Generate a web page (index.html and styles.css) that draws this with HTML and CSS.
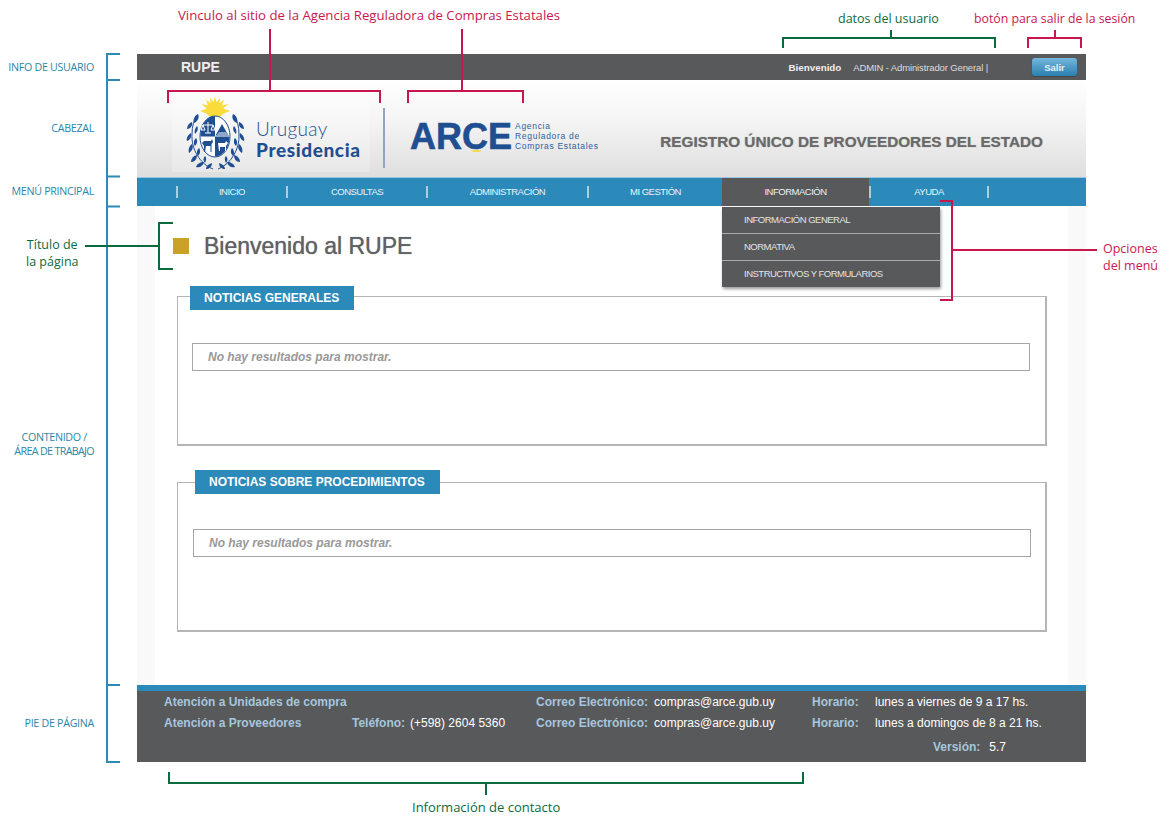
FILE: index.html
```html
<!DOCTYPE html>
<html lang="es">

<head>
    <meta charset="UTF-8">
    <title>RUPE - Bienvenido</title>
    <link rel="stylesheet" href="styles.css">
</head>

<body>
    <div class="sheet">
        <div class="mock">
            <div class="topbar">
                <span class="app-name">RUPE</span>
                <span class="welcome">Bienvenido</span>
                <span class="user">ADMIN - Administrador General |</span>
                <button class="logout" type="button">Salir</button>
            </div>

            <div class="header">
                <a class="logo-uy" href="#">
                    <svg class="crest" viewBox="0 0 60 76" width="60" height="76">
                        <ellipse cx="29" cy="13" rx="9" ry="8" fill="#f9dc3c" />
                        <polygon fill="#f9dc3c" points="14,14 21.200,11.400 15,7 22.300,8.600 19.800,2.500 24.600,6.300 24,0.500 27.400,5.200 29,0 30.600,5.200 34,0.500 33.400,6.300 38.200,2.500 35.700,8.600 43,7 36.800,11.400 44,14 29,20" />
                        <g id="branch" fill="#1f4e91">
                            <path d="M27 72C14 67 5 52 6 37 6 29 8 23 11 18" fill="none" stroke="#1f4e91" stroke-width="1" />
                            <path d="M12 17c-4 2-5 6-4 9 3-1 6-5 4-9zM6 25c-3 1-5 4-5 7 3 0 6-3 5-7zM11 29c-2 2-3 5-2 8 2-2 4-5 2-8zM5 36c-3 2-5 5-4 8 3-1 5-4 4-8zM10 41c-2 2-3 5-1 8 2-2 3-5 1-8zM6 47c-3 2-4 6-3 9 3-2 5-5 3-9zM13 51c-2 2-3 5-1 8 2-2 3-5 1-8zM11 58c-4 1-6 4-6 7 4 0 6-3 6-7zM19 59c-2 2-2 5 0 7 1-2 2-5 0-7zM18 65c-4 0-7 2-8 5 4 1 7-1 8-5zM26 66c-3 1-6 3-6 6 3 0 6-2 6-6z" />
                        </g>
                        <use href="#branch" transform="matrix(-1 0 0 1 59 0)" />
                        <ellipse cx="29" cy="39.500" rx="15" ry="20.500" fill="#fff" stroke="#1f4e91" stroke-width="1" />
                        <path d="M29 19A14.500 20 0 0 0 14.500 39.500H29z" fill="#1f4e91" />
                        <path d="M29 39.500H43.500A14.500 20 0 0 1 29 59.500z" fill="#1f4e91" />
                        <path d="M29.500 38.500L36 27 42.500 38.500z" fill="#1f4e91" />
                        <path d="M30 39L33 35H40L43 39z" fill="#8fa6c8" />
                        <path d="M22 25V36M17 28H27M17 28L15 33H19zM27 28L25 33H29zM19 36H25" stroke="#fff" stroke-width="1" fill="none" />
                        <path d="M18 44H25L26 42 27 45 25.500 47V55H24.500V49H20L19 55H18V49L16 46z" fill="#1f4e91" />
                        <path d="M32 46H39L40 44 42 46 40 49V54H39V50H34V54H33z" fill="#fff" />
                    </svg>
                    <span class="logo-uy-text">
                        <span class="uy-top">Uruguay</span>
                        <span class="uy-bottom">Presidencia</span>
                    </span>
                </a>
                <span class="logo-divider"></span>
                <a class="logo-arce" href="#">
                    <span class="arce-word">ARCE</span>
                    <span class="arce-text">Agencia<br>Reguladora de<br>Compras Estatales</span>
                </a>
                <h1 class="site-title">REGISTRO ÚNICO DE PROVEEDORES DEL ESTADO</h1>
            </div>

            <ul class="nav">
                <li class="nav-sep"></li>
                <li class="nav-item nav-inicio">INICIO</li>
                <li class="nav-sep"></li>
                <li class="nav-item nav-consultas">CONSULTAS</li>
                <li class="nav-sep"></li>
                <li class="nav-item nav-admin">ADMINISTRACIÓN</li>
                <li class="nav-sep"></li>
                <li class="nav-item nav-gestion">MI GESTIÓN</li>
                <li class="nav-item nav-info active">
                    INFORMACIÓN
                    <ul class="dropdown">
                        <li>INFORMACIÓN GENERAL</li>
                        <li>NORMATIVA</li>
                        <li>INSTRUCTIVOS Y FORMULARIOS</li>
                    </ul>
                </li>
                <li class="nav-sep"></li>
                <li class="nav-item nav-ayuda">AYUDA</li>
                <li class="nav-sep"></li>
            </ul>

            <div class="content">
                <div class="work-area">
                    <div class="page-title">
                        <span class="title-mark"></span>
                        <h2>Bienvenido al RUPE</h2>
                    </div>

                    <div class="panel">
                        <div class="panel-legend">NOTICIAS GENERALES</div>
                        <div class="panel-msg">No hay resultados para mostrar.</div>
                    </div>

                    <div class="panel panel-second">
                        <div class="panel-legend">NOTICIAS SOBRE PROCEDIMIENTOS</div>
                        <div class="panel-msg">No hay resultados para mostrar.</div>
                    </div>
                </div>
            </div>

            <div class="footer">
                <div class="footer-grid">
                    <span class="lbl wide">Atención a Unidades de compra</span>
                    <span class="lbl">Correo Electrónico:</span>
                    <span>compras@arce.gub.uy</span>
                    <span class="lbl">Horario:</span>
                    <span>lunes a viernes de 9 a 17 hs.</span>

                    <span class="lbl">Atención a Proveedores</span>
                    <span class="lbl">Teléfono:</span>
                    <span>(+598) 2604 5360</span>
                    <span class="lbl">Correo Electrónico:</span>
                    <span>compras@arce.gub.uy</span>
                    <span class="lbl">Horario:</span>
                    <span>lunes a domingos de 8 a 21 hs.</span>
                </div>
                <div class="version">
                    <span class="lbl">Versión:</span>
                    <span>5.7</span>
                </div>
            </div>
        </div>

        <!-- anotaciones sobre la captura -->
        <svg class="marks" viewBox="0 0 1172 824" width="1172" height="824">
            <path class="mark-blue" d="M120 54H107V762H120M107 80H120M107 176.500H120M107 206.500H120M107 685H120" />
            <path class="mark-red" d="M168 103V91H380V103M270 29V91M408 103V91H523V103M462 29V91" />
            <path class="mark-red" d="M1028 48V38H1081V48M1055 30V38" />
            <path class="mark-red" d="M940 201H952V300H940M952 250H1097" />
            <path class="mark-green" d="M783 48V38H995V48M891 30V38" />
            <path class="mark-green" d="M173 223H159V269H173M85 246H159" />
            <path class="mark-green" d="M169 772V783H803V772M486 783V795" />
        </svg>

        <span class="note note-red note-link">Vinculo al sitio de la Agencia Reguladora de Compras Estatales</span>
        <span class="note note-green note-data">datos del usuario</span>
        <span class="note note-red note-exit">botón para salir de la sesión</span>
        <span class="note note-red note-options">Opciones<br>del menú</span>
        <span class="note note-green note-title">Título de<br>la página</span>
        <span class="note note-green note-contact">Información de contacto</span>

        <span class="side side-info">INFO DE USUARIO</span>
        <span class="side side-head">CABEZAL</span>
        <span class="side side-menu">MENÚ PRINCIPAL</span>
        <span class="side side-work">CONTENIDO /<br><span class="side-tight">ÁREA DE TRABAJO</span></span>
        <span class="side side-foot">PIE DE PÁGINA</span>
    </div>
</body>

</html>
```

FILE: styles.css
```css
body {
    margin: 0;
    background-color: #fff;
    font-family: "Liberation Sans", Arial, sans-serif;
    color: #58595b;
}

ul {
    list-style-type: none;
    margin: 0;
    padding: 0;
}

a {
    text-decoration: none;
}

.sheet {
    position: relative;
    width: 1172px;
    height: 824px;
    overflow: hidden;
    padding: 54px 86px 0 137px;
    box-sizing: border-box;
}

/* barra superior */
.topbar {
    height: 26px;
    background-color: #58595b;
    display: flex;
    align-items: center;
    padding: 0 9px 0 44px;
    color: #eee;
}

.app-name {
    font-size: 14px;
    font-weight: bold;
    margin-right: auto;
}

.welcome {
    font-size: 9.800px;
    font-weight: bold;
    margin-right: 12px;
}

.user {
    font-size: 9.500px;
    letter-spacing: -0.130px;
    color: #ddd;
    margin-right: 44px;
}

.logout {
    width: 45px;
    height: 18px;
    padding: 0;
    border: 0;
    border-radius: 3px;
    background: linear-gradient(#74b7dd, #2b7fb0);
    box-shadow: 0 1px 1px #444;
    color: #e8f2f8;
    font-family: inherit;
    font-size: 9.500px;
    font-weight: bold;
}

/* cabezal */
.header {
    height: 97px;
    box-sizing: border-box;
    background: linear-gradient(#fff, #f5f5f5 40%, #dedede);
    display: flex;
    align-items: stretch;
}

.logo-uy {
    margin: 18px 0 5px 35px;
    width: 198px;
    display: flex;
    align-items: center;
    background-color: rgba(255, 255, 255, 0.25);
}

.crest {
    margin-left: 14px;
    flex: none;
}

.logo-uy-text {
    margin-left: 10px;
    display: flex;
    flex-direction: column;
    color: #1f4e91;
    padding-top: 7px;
}

.uy-top {
    font-family: Lato, sans-serif;
    font-size: 19px;
    font-weight: 300;
    line-height: 21px;
    letter-spacing: 0.300px;
}

.uy-bottom {
    font-family: Lato, sans-serif;
    font-size: 19px;
    font-weight: 900;
    line-height: 21px;
    letter-spacing: 0.600px;
}

.logo-divider {
    width: 2px;
    margin: 28px 0 9px 13px;
    background-color: #8ea5c6;
}

.logo-arce {
    margin: 18px 0 5px 0;
    padding: 4px 0 0 25px;
    width: 225px;
    box-sizing: border-box;
    display: flex;
    align-items: center;
    color: #1f4e91;
}

.arce-word {
    position: relative;
    font-size: 36px;
    font-weight: bold;
    line-height: 36px;
    -webkit-text-stroke: 0.600px #1f4e91;
}

.arce-word::after {
    content: "";
    position: absolute;
    left: 62px;
    bottom: 3px;
    width: 9px;
    height: 2px;
    border-radius: 0 0 4px 4px;
    background-color: #f1dc4b;
}

.arce-text {
    margin-left: 3px;
    font-size: 8.500px;
    line-height: 9.800px;
    letter-spacing: 0.700px;
    color: #2f5f9e;
    white-space: nowrap;
}

.site-title {
    margin: 53px 43px 0 auto;
    font-size: 15.300px;
    line-height: 18px;
    font-weight: bold;
    color: #6a6a6a;
    white-space: nowrap;
    text-shadow: 0 0 1px #999;
}

/* menu principal */
.nav {
    position: relative;
    height: 29px;
    box-sizing: border-box;
    background-color: #2b8aba;
    border-top: 1px solid #9cc8de;
    display: flex;
    align-items: center;
    padding-left: 39px;
    color: #eaf3f8;
    font-size: 9.500px;
    letter-spacing: -0.500px;
}

.nav-sep {
    width: 2px;
    height: 12px;
    background-color: #a9cfe3;
}

.nav-item {
    text-align: center;
    line-height: 28px;
}

.nav-inicio {
    width: 108px;
}

.nav-consultas {
    width: 138px;
}

.nav-admin {
    width: 159px;
}

.nav-gestion {
    width: 133px;
}

.nav-info {
    width: 147px;
}

.nav-ayuda {
    width: 116px;
}

.active {
    background-color: #58595b;
}

.dropdown {
    position: absolute;
    left: 585px;
    top: 29px;
    width: 218px;
    background-color: #58595b;
    box-shadow: 1px 2px 3px #999;
    text-align: left;
    color: #e4e4e4;
}

.dropdown li {
    height: 26px;
    line-height: 26px;
    padding-left: 22px;
    border-bottom: 1px solid #aaa;
}

.dropdown li:last-child {
    border-bottom: 0;
}

/* contenido */
.content {
    height: 479px;
    background-color: #f9f9f9;
    padding: 0 18px;
}

.work-area {
    height: 100%;
    box-sizing: border-box;
    background-color: #fff;
    padding: 32px 21px 0 22px;
}

.page-title {
    display: flex;
    align-items: center;
    height: 16px;
    margin-left: -4px;
}

.title-mark {
    width: 16px;
    height: 16px;
    background-color: #c9a227;
}

.page-title h2 {
    margin: 0 0 0 15px;
    font-size: 23px;
    font-weight: normal;
    color: #606163;
    text-shadow: 0 0 1px #777;
}

.panel {
    height: 150px;
    box-sizing: border-box;
    margin-top: 42px;
    border: 1px solid #b5b5b5;
    border-bottom-width: 2px;
    border-right-width: 2px;
}

.panel-second {
    margin-top: 36px;
    height: 150px;
}

.panel-legend {
    width: fit-content;
    height: 24px;
    line-height: 24px;
    margin: -11px 0 0 12px;
    padding: 0 15px 0 14px;
    background-color: #2b8aba;
    color: #fff;
    font-size: 12px;
    font-weight: bold;
}

.panel-second .panel-legend {
    margin: -13px 0 0 17px;
}

.panel-msg {
    height: 28px;
    box-sizing: border-box;
    line-height: 26px;
    margin: 33px 15px 0 14px;
    padding-left: 15px;
    border: 1px solid #a5a5a5;
    color: #999;
    font-size: 12px;
    font-style: italic;
    font-weight: bold;
}

.panel-second .panel-msg {
    margin: 35px 14px 0 15px;
}

/* pie de pagina */
.footer {
    height: 77px;
    box-sizing: border-box;
    background-color: #58595b;
    border-top: 6px solid #2b8aba;
    color: #fff;
    font-size: 12px;
}

.footer-grid {
    display: grid;
    grid-template-columns: 188px 58px 126px 118px 158px 63px auto;
    row-gap: 7px;
    padding: 4px 0 0 27px;
    line-height: 14px;
    white-space: nowrap;
}

.wide {
    grid-column: 1 / span 3;
}

.lbl {
    color: #a7c6dd;
    font-weight: bold;
}

.version {
    display: flex;
    gap: 9px;
    margin: 10px 0 0 796px;
    line-height: 14px;
}

/* anotaciones */
.marks {
    position: absolute;
    left: 0;
    top: 0;
    fill: none;
    stroke-width: 2;
}

.mark-blue {
    stroke: #2b8aba;
}

.mark-red {
    stroke: #c8174f;
}

.mark-green {
    stroke: #0c6b3c;
}

.note {
    position: absolute;
    font-family: "Open Sans", sans-serif;
    font-size: 12.500px;
    line-height: 16.500px;
    white-space: nowrap;
}

.note-red {
    color: #c8174f;
}

.note-green {
    color: #0c6b3c;
}

.note-link {
    left: 178px;
    top: 7px;
    font-size: 13.200px;
}

.note-data {
    left: 838px;
    top: 11px;
}

.note-exit {
    left: 974px;
    top: 11px;
    font-size: 12.300px;
}

.note-options {
    left: 1103px;
    top: 241px;
}

.note-title {
    left: 26px;
    top: 237px;
    text-align: center;
}

.note-contact {
    left: 412px;
    top: 799px;
    font-size: 13px;
}

.side {
    position: absolute;
    right: 1078px;
    font-family: "Open Sans", sans-serif;
    font-size: 10.700px;
    line-height: 14px;
    letter-spacing: -0.300px;
    color: #2b86a8;
    text-align: right;
    white-space: nowrap;
}

.side-tight {
    letter-spacing: -0.650px;
}

.side-info {
    top: 60px;
}

.side-head {
    top: 121px;
}

.side-menu {
    top: 184px;
}

.side-work {
    top: 430px;
    text-align: center;
}

.side-foot {
    top: 716px;
}
```
